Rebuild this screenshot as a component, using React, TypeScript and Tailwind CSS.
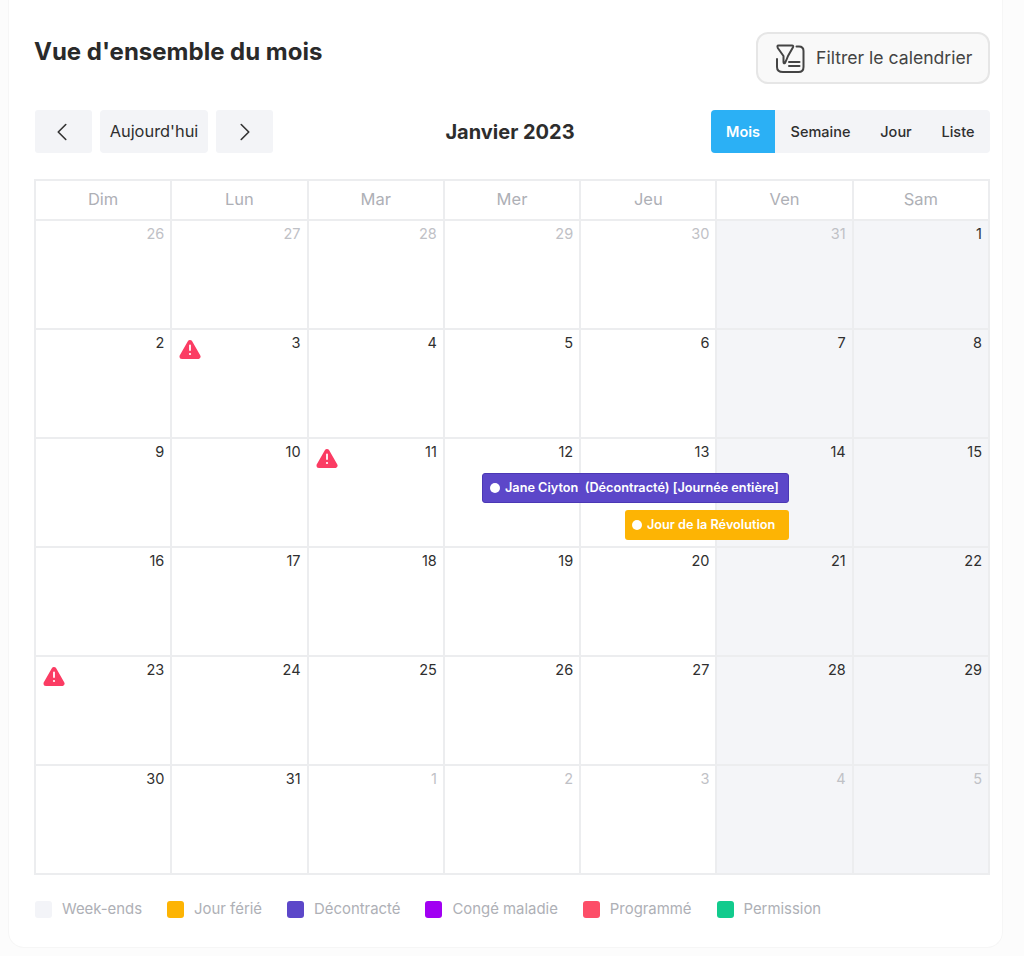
import { ChevronLeft, ChevronRight } from 'lucide-react';

const dayNames = ['Dim', 'Lun', 'Mar', 'Mer', 'Jeu', 'Ven', 'Sam'];

const days = [
  26, 27, 28, 29, 30, 31, 1,
  2, 3, 4, 5, 6, 7, 8,
  9, 10, 11, 12, 13, 14, 15,
  16, 17, 18, 19, 20, 21, 22,
  23, 24, 25, 26, 27, 28, 29,
  30, 31, 1, 2, 3, 4, 5,
];

const alertCells = [8, 16, 28];

const legend = [
  { label: 'Week-ends', color: 'bg-[#f3f4f8]' },
  { label: 'Jour férié', color: 'bg-[#fdb404]' },
  { label: 'Décontracté', color: 'bg-[#5c47c9]' },
  { label: 'Congé maladie', color: 'bg-[#a100f2]' },
  { label: 'Programmé', color: 'bg-[#fd4e68]' },
  { label: 'Permission', color: 'bg-[#12cb8d]' },
];

function AlertIcon() {
  return (
    <svg width="22" height="22" viewBox="0 0 22 22" className="mt-[5px]">
      <path d="M11 4.5 L19 18.5 H3 Z" fill="#fb3c63" stroke="#fb3c63" strokeWidth="5" strokeLinejoin="round" />
      <rect x="10.1" y="6.5" width="1.8" height="6.5" rx="0.9" fill="#fff" />
      <circle cx="11" cy="16" r="1.1" fill="#fff" />
    </svg>
  );
}

function FilterIcon() {
  return (
    <svg width="30" height="30" viewBox="0 0 30 30" fill="none" stroke="#444444" strokeWidth="2" strokeLinecap="round" strokeLinejoin="round">
      <path d="M3.5 2.5 H17 Q18.8 2.5 18 4.2 L13 13 Q11.5 17 10 20 Q8.5 21 8.5 19 V13 L2.8 5 Q1.8 2.5 3.5 2.5 Z" />
      <path d="M21.5 3.5 H24 Q28.5 3.5 28.5 8 V24 Q28.5 29 23.5 29 H8 Q2 29 2 24 V16" />
      <path d="M14 19 H24.5 M14 23 H24.5" />
    </svg>
  );
}

export default function App() {
  return (
    <div className="w-[1024px] h-[956px] bg-[#fcfcfc] overflow-hidden" style={{ fontFamily: 'Inter, sans-serif' }}>
      <div className="ml-[8px] w-[995px] h-[948px] bg-white rounded-b-2xl border-x border-b border-[#f6f6f6] pl-[25px] pr-[12px] pt-[32px]">
        {/* Title */}
        <div className="flex justify-between items-start h-[52px]">
          <h1 className="mt-[4px] text-[24px] leading-[32px] font-bold text-[#2a2a2a]">Vue d'ensemble du mois</h1>
          <button className="w-[234px] h-[52px] flex items-center gap-[11px] pl-[17px] rounded-xl bg-[#f9f9f9] border-2 border-[#e6e6e6]">
            <FilterIcon />
            <span className="text-[17.6px] text-[#444444] whitespace-nowrap">Filtrer le calendrier</span>
          </button>
        </div>

        {/* Toolbar */}
        <div className="mt-[26px] ml-[1px] flex items-center h-[43px]">
          <div className="flex gap-[8px] h-full">
            <button className="w-[57px] flex items-center justify-center pr-[3px] bg-[#f3f4f7] rounded-[3px] text-[#333]"><ChevronLeft size={30} strokeWidth={1.3} /></button>
            <button className="w-[108px] flex items-center justify-center bg-[#f3f4f7] rounded-[4px] text-[16.4px] text-[#2f2f2f]">Aujourd'hui</button>
            <button className="w-[57px] flex items-center justify-center bg-[#f3f4f7] rounded-[3px] text-[#333]"><ChevronRight size={30} strokeWidth={1.3} /></button>
          </div>
          <div className="flex-1 pl-[36px] text-center text-[20px] font-bold text-[#2d2d2d]">Janvier 2023</div>
          <div className="w-[279px] flex h-full rounded-[4px] bg-[#f3f4f7] text-[14.5px] font-medium text-[#2f2f2f]">
            <div className="w-[64px] flex items-center justify-center bg-[#2bb0f5] text-white rounded-l-[4px] font-semibold">Mois</div>
            <div className="w-[91px] flex items-center justify-center">Semaine</div>
            <div className="w-[60px] flex items-center justify-center">Jour</div>
            <div className="w-[64px] flex items-center justify-center">Liste</div>
          </div>
        </div>

        {/* Calendar */}
        <div className="relative mt-[26px] w-[956px] grid grid-cols-7 border-l-2 border-t-2 border-[#ecedef]">
          {dayNames.map(d => (
            <div key={d} className="h-[40px] flex items-center justify-center pb-[2px] border-r-2 border-b-2 border-[#ecedef] text-[16.5px] text-[#aeb0b6]">{d}</div>
          ))}
          {days.map((d, i) => {
            const muted = i < 6 || i >= 37;
            const weekend = i % 7 === 5 || i % 7 === 6;
            return (
              <div key={i} className={`h-[109px] flex justify-between pl-[7px] pr-[6px] pt-[3px] border-r-2 border-b-2 border-[#ecedef] ${weekend ? 'bg-[#f4f5f8]' : 'bg-white'}`}>
                {alertCells.includes(i) ? <AlertIcon /> : <span />}
                <span className={`text-[14.5px] leading-[20px] ${muted ? 'text-[#bfc1c6]' : 'text-[#2f2f2f]'}`}>{d}</span>
              </div>
            );
          })}

          {/* Events */}
          <div className="absolute left-[446px] top-[292px] w-[307px] h-[30px] flex items-center gap-[5px] pl-[7px] rounded-[3px] bg-[#5c47c9] border border-[#4b38b5] text-white text-[12.7px] font-semibold whitespace-nowrap">
            <span className="w-[10px] h-[10px] rounded-full bg-white" />
            <span>Jane Ciyton&nbsp; (Décontracté) [Journée entière]</span>
          </div>
          <div className="absolute left-[589px] top-[329px] w-[164px] h-[30px] flex items-center gap-[5px] pl-[7px] rounded-[3px] bg-[#fdb404] text-white text-[12.7px] font-semibold whitespace-nowrap">
            <span className="w-[10px] h-[10px] rounded-full bg-white" />
            <span>Jour de la Révolution</span>
          </div>
        </div>

        {/* Legend */}
        <div className="mt-[23px] ml-[1px] flex items-center gap-[25px] text-[14.9px] text-[#aeb0b6]">
          {legend.map(l => (
            <div key={l.label} className="flex items-center gap-[10px]">
              <span className={`w-[17px] h-[17px] rounded-[3px] ${l.color}`} />
              <span>{l.label}</span>
            </div>
          ))}
        </div>
      </div>
    </div>
  );
}
